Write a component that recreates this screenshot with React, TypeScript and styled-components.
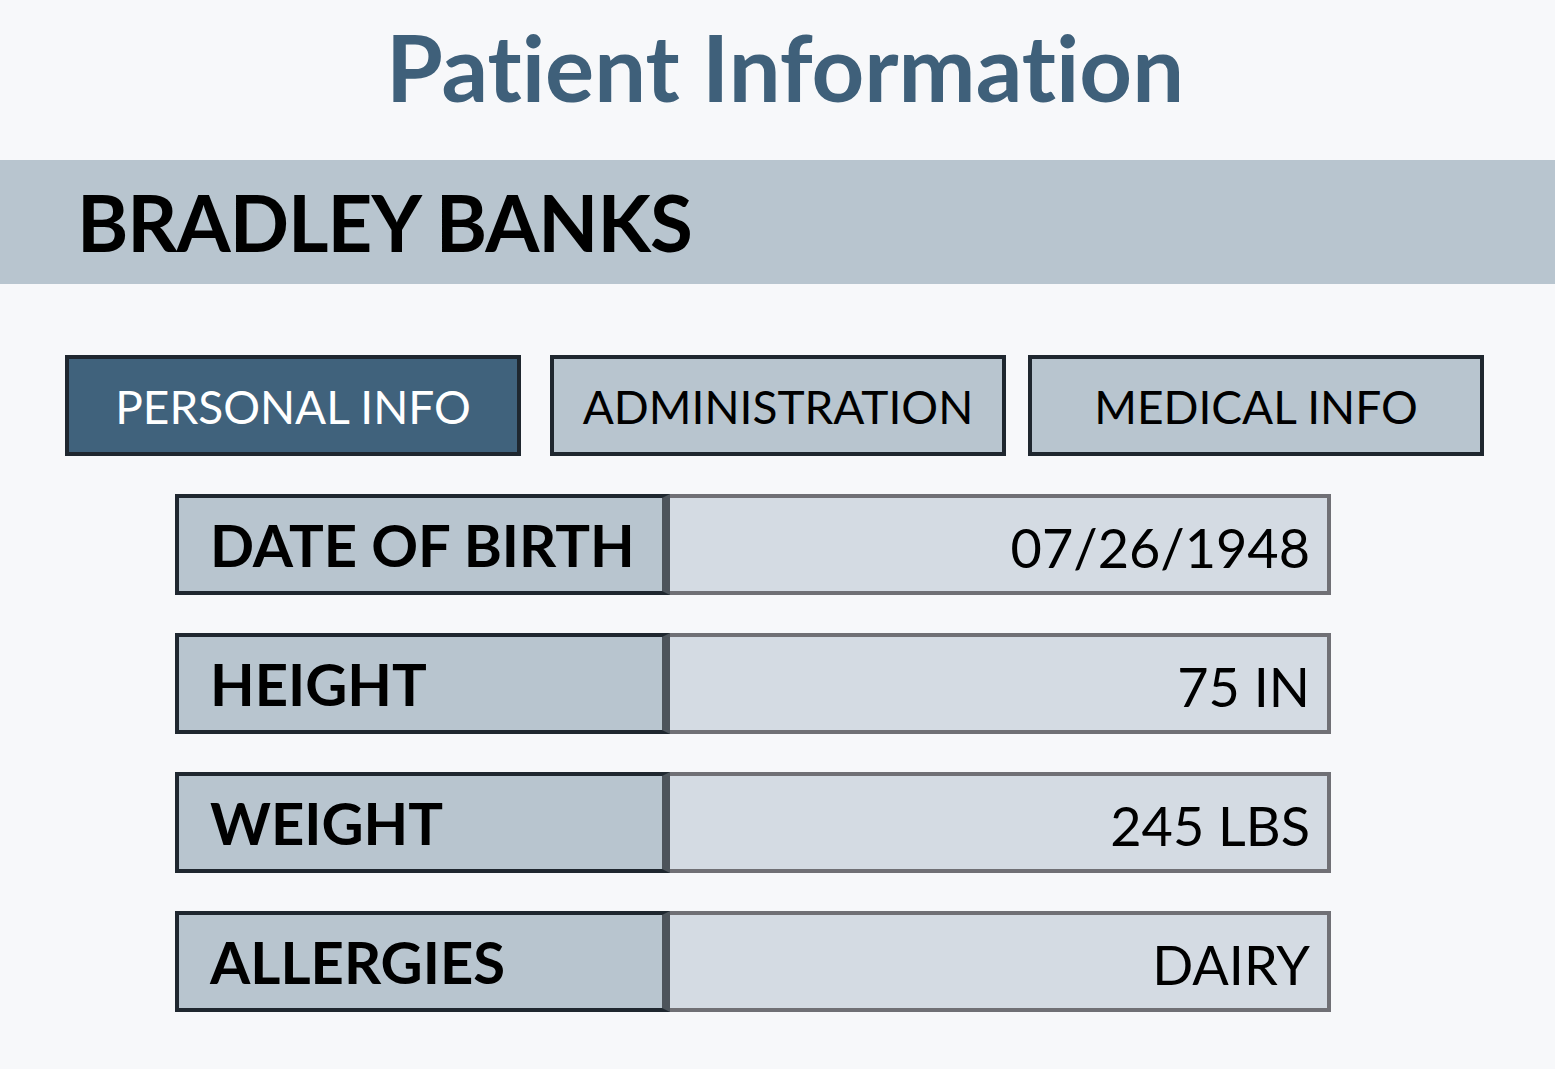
import React from "react";
import styled, { createGlobalStyle } from "styled-components";

const Global = createGlobalStyle`
  html, body { margin: 0; padding: 0; background: #f7f8fa; }
  body {
    font-family: Lato, "Open Sans", sans-serif;
    font-variant-ligatures: none;
    font-feature-settings: "liga" 0, "clig" 0;
  }
`;

const Page = styled.div`
  width: 1555px;
  height: 1069px;
  background: #f7f8fa;
  display: flex;
  flex-direction: column;
  overflow: hidden;
`;

const Title = styled.h1`
  margin: 0;
  height: 160px;
  display: flex;
  align-items: center;
  justify-content: center;
  padding-left: 15px;
  font-family: Lato, sans-serif;
  font-weight: 700;
  font-size: 92px;
  color: #3f607a;
  line-height: 1;
  box-sizing: border-box;
  padding-bottom: 26px;
  font-variant-ligatures: none;
`;

const NameBand = styled.div`
  height: 124px;
  background: #b8c5cf;
  display: flex;
  align-items: center;
  padding-left: 77px;
`;

const Name = styled.h2`
  margin: 0;
  font-family: Lato, sans-serif;
  font-weight: 700;
  font-size: 78px;
  letter-spacing: -1px;
  color: #000;
  line-height: 1;
`;

const Tabs = styled.div`
  display: flex;
  gap: 22px;
  margin: 71px 0 0 65px;
`;

const Tab = styled.div<{ $active?: boolean }>`
  width: 456px;
  height: 101px;
  box-sizing: border-box;
  border: 4px solid #1f272f;
  background: ${(p) => (p.$active ? "#40627c" : "#b8c5cf")};
  color: ${(p) => (p.$active ? "#ffffff" : "#000000")};
  display: flex;
  align-items: center;
  justify-content: center;
  font-family: Lato, sans-serif;
  font-weight: 400;
  font-size: 46px;
  line-height: 1;
  padding-top: 2px;

  &:first-child {
    margin-right: 7px;
  }
`;

const Rows = styled.div`
  display: flex;
  flex-direction: column;
  gap: 38px;
  margin: 38px 0 0 175px;
  width: 1156px;
`;

const Row = styled.div`
  display: flex;
  height: 101px;
`;

const Label = styled.div`
  width: 495px;
  box-sizing: border-box;
  border: 4px solid #1f272f;
  border-right: 8px solid #4d545b;
  background: #b8c5cf;
  display: flex;
  align-items: center;
  padding-left: 31px;
  font-family: Lato, sans-serif;
  font-weight: 700;
  font-size: 58px;
  color: #000;
  line-height: 1;
`;

const Value = styled.div`
  flex: 1;
  box-sizing: border-box;
  border: 4px solid #707075;
  border-left: none;
  background: #d4dbe3;
  display: flex;
  align-items: center;
  justify-content: flex-end;
  padding-right: 17px;
  padding-top: 6px;
  font-family: Lato, sans-serif;
  font-weight: 400;
  font-size: 54px;
  color: #000;
  line-height: 1;
`;

const rows = [
  { label: "DATE OF BIRTH", value: "07/26/1948" },
  { label: "HEIGHT", value: "75 IN" },
  { label: "WEIGHT", value: "245 LBS" },
  { label: "ALLERGIES", value: "DAIRY" },
];

export default function App() {
  return (
    <Page>
      <Global />
      <Title>Patient Information</Title>
      <NameBand>
        <Name>BRADLEY BANKS</Name>
      </NameBand>
      <Tabs>
        <Tab $active>PERSONAL INFO</Tab>
        <Tab>ADMINISTRATION</Tab>
        <Tab>MEDICAL INFO</Tab>
      </Tabs>
      <Rows>
        {rows.map((r) => (
          <Row key={r.label}>
            <Label>{r.label}</Label>
            <Value>{r.value}</Value>
          </Row>
        ))}
      </Rows>
    </Page>
  );
}
